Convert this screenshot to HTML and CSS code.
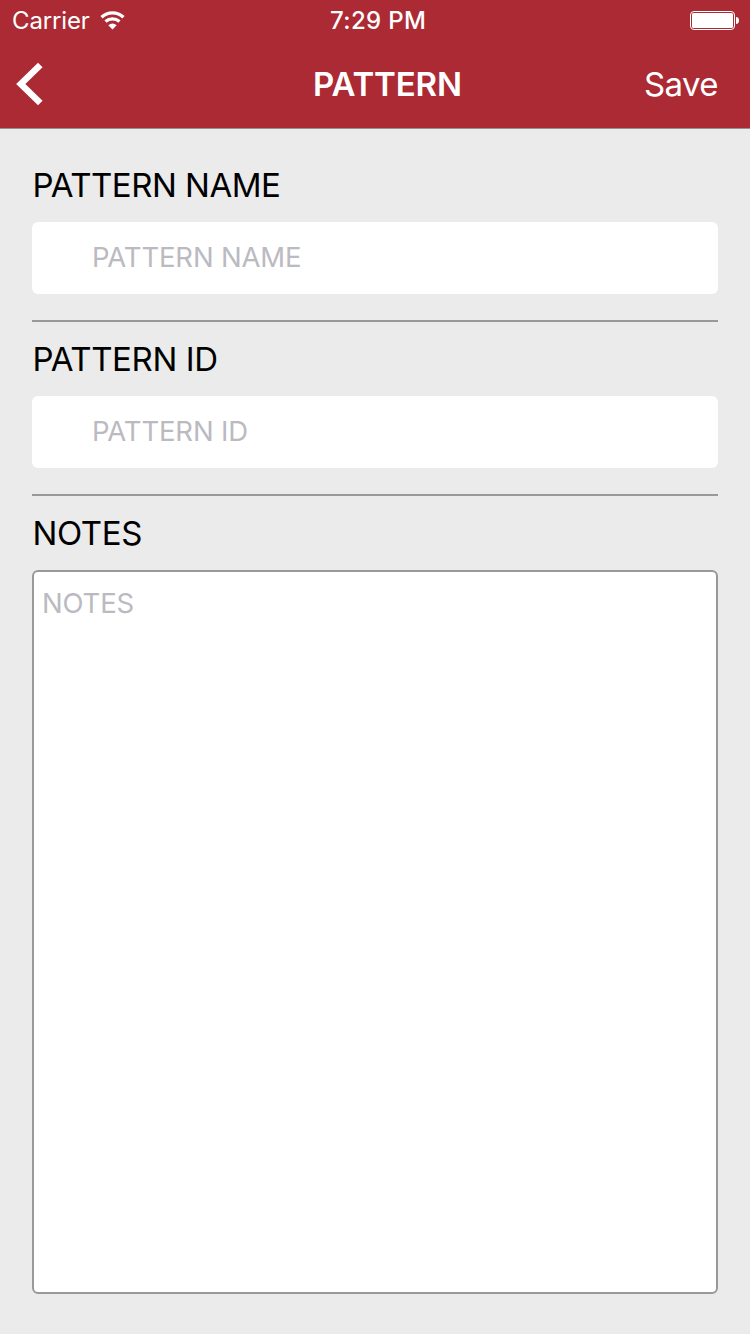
FILE: index.html
```html
<!DOCTYPE html>
<html lang="en">
<head>
<meta charset="utf-8">
<title>Pattern</title>
<link rel="stylesheet" href="styles.css">
</head>
<body>
<div class="screen">
  <header class="header">
    <div class="status">
      <div class="status-left">
        <span class="carrier">Carrier</span>
        <svg class="wifi" width="26" height="20" viewBox="0 0 26 20">
          <g fill="none" stroke="#fff" stroke-width="3.300">
            <path d="M1.500 6.200a16.200 16.200 0 0 1 22 0"/>
            <path d="M5.500 10.500a10.600 10.600 0 0 1 14 0"/>
          </g>
          <path d="M8.300 14.300a6.500 6.500 0 0 1 8.400 0L12.500 18.600z" fill="#fff"/>
        </svg>
      </div>
      <span class="time">7:29 PM</span>
      <svg class="battery" width="50" height="20" viewBox="0 0 50 20">
        <rect x=".5" y=".5" width="44" height="18" rx="3.5" fill="none" stroke="#fff"/>
        <rect x="2" y="2" width="41" height="15" rx="1.500" fill="#fff"/>
        <path d="M46 6c2 0 3 1.300 3 3.500s-1 3.500-3 3.500z" fill="#fff"/>
      </svg>
    </div>
    <nav class="nav">
      <svg class="back" width="28" height="44" viewBox="0 0 28 44">
        <path d="M24.300 3L4.800 22l19.500 19" fill="none" stroke="#fff" stroke-width="6.500"/>
      </svg>
      <h1 class="title">PATTERN</h1>
      <span class="save">Save</span>
    </nav>
  </header>
  <main class="form">
    <section class="group">
      <div class="label label-name">PATTERN NAME</div>
      <div class="field">PATTERN NAME</div>
    </section>
    <section class="group">
      <div class="label label-id">PATTERN ID</div>
      <div class="field">PATTERN ID</div>
    </section>
    <section class="notes-group">
      <div class="label label-notes">NOTES</div>
      <div class="notes">NOTES</div>
    </section>
  </main>
</div>
</body>
</html>
```
FILE: styles.css
```css
* { box-sizing: border-box; }
body {
  margin: 0;
  background: #ebebeb;
  font-family: Inter, "Liberation Sans", sans-serif;
}
.screen {
  display: flex;
  flex-direction: column;
  width: 750px;
  height: 1334px;
  overflow: hidden;
}
.header {
  height: 129px;
  background: #ab2a33;
  border-bottom: 1px solid #929292;
  color: #fff;
}
.status {
  display: grid;
  grid-template-columns: 330px 1fr 60px;
  align-items: center;
  height: 40px;
  padding-top: 2px;
  font-size: 24px;
  line-height: 38px;
}
.status-left { display: flex; align-items: center; padding-left: 12px; }
.wifi { margin-bottom: 1px; }
.carrier { width: 88px; letter-spacing: -0.15px; }
.time { font-weight: 500; letter-spacing: 0.35px; }
.nav {
  display: grid;
  grid-template-columns: 313px 1fr 106px;
  align-items: center;
  height: 88px;
  line-height: 86px;
}
.back { margin-left: 16px; }
.title { margin: 0; font-size: 33px; font-weight: 600; letter-spacing: -0.15px; }
.save { font-size: 33px; letter-spacing: -0.6px; }
.form {
  display: flex;
  flex: 1;
  flex-direction: column;
  padding: 19px 32px 40px;
}
.group { height: 174px; border-bottom: 2px solid #999; }
.label {
  height: 74px;
  padding-left: 0.5px;
  color: #000;
  font-size: 33px;
  line-height: 74px;
  white-space: nowrap;
}
.label-name { letter-spacing: -0.48px; }
.label-id { letter-spacing: -0.4px; }
.label-notes { letter-spacing: -0.4px; }
.field {
  height: 72px;
  padding-left: 60px;
  border-radius: 6px;
  background: #fff;
  color: #bbbac1;
  font-size: 27.5px;
  line-height: 71px;
  letter-spacing: -0.17px;
  white-space: nowrap;
}
.notes-group { display: flex; flex: 1; flex-direction: column; }
.notes {
  flex: 1;
  padding: 11px 8px;
  border: 2px solid #999;
  border-radius: 6px;
  background: #fff;
  color: #bbbac1;
  font-size: 27.5px;
  line-height: 40px;
  letter-spacing: -0.17px;
}
```
